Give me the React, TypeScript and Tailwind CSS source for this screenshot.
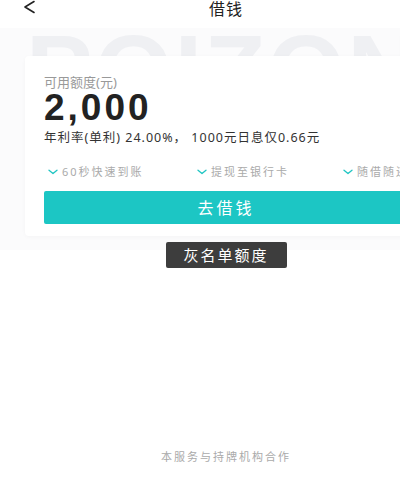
const features = ['60秒快速到账', '提现至银行卡', '随借随还']

const Tick = () => (
  <svg width="10" height="6" viewBox="0 0 10 6" fill="none" className="shrink-0">
    <path d="M1 1.2 L5 4.6 L9 1.2" stroke="#1fc5c3" strokeWidth="1.3" strokeLinecap="round" strokeLinejoin="round" />
  </svg>
)

const App = () => {
  return (
    <div
      className="relative h-[477px] w-[400px] overflow-hidden bg-white"
      style={{ fontFamily: '"Noto Sans", "Noto Sans CJK SC", sans-serif' }}
    >
      <div className="w-[452px]">
        {/* Top bar */}
        <div className="relative flex h-[28px] items-start justify-center bg-white">
          <svg className="absolute left-[22px] top-[0px]" width="14" height="14" viewBox="0 0 14 14" fill="none">
            <path d="M12 1.5 L3 7 L12 12.5" stroke="#222" strokeWidth="1.6" strokeLinecap="round" strokeLinejoin="round" />
          </svg>
          <span className="text-[16px] leading-[18px] tracking-[1px] text-[#222]">借钱</span>
        </div>

        {/* Hero with watermark + card */}
        <div className="relative h-[222px] bg-[#fbfbfc] pt-[28px]">
          <div
            className="absolute left-[26px] top-[-8px] select-none whitespace-nowrap text-[100px] font-black leading-none tracking-[2px] text-[#eff0f3]"
            style={{ fontFamily: '"Liberation Sans", Arial, sans-serif' }}
          >
            POIZON
          </div>

          <div className="relative ml-[25px] w-[402px] rounded-[4px] bg-white px-[19px] pb-[12px] pt-[19px] shadow-[0_1px_4px_rgba(0,0,0,0.03)]">
            <p className="text-[13px] leading-[14px] text-[#999]">可用额度(元)</p>
            <p
              className="text-[37px] font-bold leading-[37px] tracking-[3px] text-[#222]"
              style={{ fontFamily: '"Liberation Sans", Arial, sans-serif' }}
            >
              2,000
            </p>
            <p className="mt-[4px] text-[12.5px] leading-[16px] tracking-[1px] text-[#333]">
              年利率(单利) 24.00%， 1000元日息仅0.66元
            </p>

            <div className="mt-[19px] flex items-center text-[11px] leading-[14px] text-[#aaa]">
              {features.map((f, i) => (
                <div key={f} className={`flex shrink-0 items-center gap-[4px] ${i === 0 ? 'w-[153px] pl-[4px]' : 'w-[146px]'}`}>
                  <Tick />
                  <span className="tracking-[2px]">{f}</span>
                </div>
              ))}
            </div>

            <button className="mt-[12px] flex h-[33px] w-full items-center justify-center rounded-[2px] bg-[#1cc6c4] text-[16px] tracking-[3px] text-white">
              去借钱
            </button>
          </div>
        </div>

        <div className="relative flex justify-center">
          <div className="-mt-[8px] flex h-[26px] w-[121px] items-center justify-center rounded-[2px] bg-[#3d3d3d] text-[15px] tracking-[2px] text-white">
            灰名单额度
          </div>
        </div>

        <p className="mt-[182px] text-center text-[11px] leading-[14px] tracking-[2px] text-[#aaa]">本服务与持牌机构合作</p>
      </div>
    </div>
  )
}

export default App
